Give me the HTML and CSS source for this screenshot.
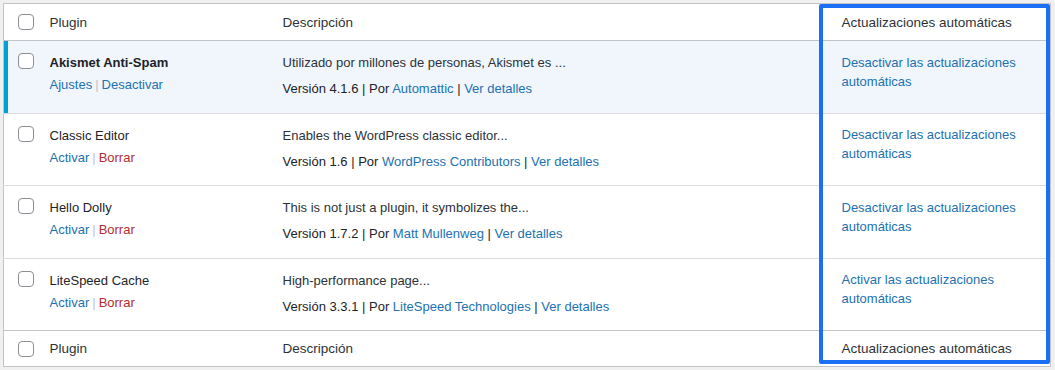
FILE: index.html
```html
<!DOCTYPE html>
<html lang="es">
<head>
    <meta charset="UTF-8">
    <meta name="viewport" content="width=device-width, initial-scale=1.0">
    <title>Plugins</title>
    <link rel="stylesheet" href="styles.css">
</head>
<body>
    <table class="plugins">
        <colgroup>
            <col class="colCheck">
            <col class="colName">
            <col class="colDesc">
            <col class="colAuto">
        </colgroup>
        <thead>
            <tr>
                <td class="check"><input type="checkbox"></td>
                <th>Plugin</th>
                <th>Descripción</th>
                <th>Actualizaciones automáticas</th>
            </tr>
        </thead>
        <tbody>
            <tr class="active">
                <td class="check"><input type="checkbox"></td>
                <td class="name">
                    <strong>Akismet Anti-Spam</strong>
                    <div class="rowActions"><a href="#">Ajustes</a><span class="sep">|</span><a href="#">Desactivar</a></div>
                </td>
                <td class="desc">
                    <p>Utilizado por millones de personas, Akismet es ...</p>
                    <p>Versión 4.1.6 | Por <a href="#">Automattic</a> | <a href="#">Ver detalles</a></p>
                </td>
                <td class="auto"><a href="#">Desactivar las actualizaciones automáticas</a></td>
            </tr>
            <tr>
                <td class="check"><input type="checkbox"></td>
                <td class="name">
                    <span class="title">Classic Editor</span>
                    <div class="rowActions"><a href="#">Activar</a><span class="sep">|</span><a href="#" class="delete">Borrar</a></div>
                </td>
                <td class="desc">
                    <p>Enables the WordPress classic editor...</p>
                    <p>Versión 1.6 | Por <a href="#">WordPress Contributors</a> | <a href="#">Ver detalles</a></p>
                </td>
                <td class="auto"><a href="#">Desactivar las actualizaciones automáticas</a></td>
            </tr>
            <tr>
                <td class="check"><input type="checkbox"></td>
                <td class="name">
                    <span class="title">Hello Dolly</span>
                    <div class="rowActions"><a href="#">Activar</a><span class="sep">|</span><a href="#" class="delete">Borrar</a></div>
                </td>
                <td class="desc">
                    <p>This is not just a plugin, it symbolizes the...</p>
                    <p>Versión 1.7.2 | Por <a href="#">Matt Mullenweg</a> | <a href="#">Ver detalles</a></p>
                </td>
                <td class="auto"><a href="#">Desactivar las actualizaciones automáticas</a></td>
            </tr>
            <tr>
                <td class="check"><input type="checkbox"></td>
                <td class="name">
                    <span class="title">LiteSpeed Cache</span>
                    <div class="rowActions"><a href="#">Activar</a><span class="sep">|</span><a href="#" class="delete">Borrar</a></div>
                </td>
                <td class="desc">
                    <p>High-performance page...</p>
                    <p>Versión 3.3.1 | Por <a href="#">LiteSpeed Technologies</a> | <a href="#">Ver detalles</a></p>
                </td>
                <td class="auto"><a href="#">Activar las actualizaciones automáticas</a></td>
            </tr>
        </tbody>
        <tfoot>
            <tr>
                <td class="check"><input type="checkbox"></td>
                <th>Plugin</th>
                <th>Descripción</th>
                <th>Actualizaciones automáticas</th>
            </tr>
        </tfoot>
    </table>

    <div class="highlight"></div>
</body>
</html>
```

FILE: styles.css
```css
body {
    font-family: 'Liberation Sans', Arial, sans-serif;
    font-size: 13px;
    color: #2c3338;
    background: #f0f0f1;
    margin: 0;
    padding: 3px 4px 3px 3px;
    position: relative;
}

a {
    color: #2271b1;
    text-decoration: none;
}

.plugins {
    width: 1048px;
    table-layout: fixed;
    border-collapse: collapse;
    background: #fff;
    border: 1px solid #c3c4c7;
}

.colCheck { width: 36px; }
.colName { width: 233px; }
.colDesc { width: 559px; }

.plugins th {
    font-weight: normal;
    font-size: 13.5px;
    text-align: left;
    color: #2c3338;
    padding: 0 10px;
    line-height: 20px;
}

.plugins thead tr {
    height: 37px;
    border-bottom: 1px solid #c3c4c7;
}

.plugins thead th {
    padding-top: 1px;
}

.plugins tfoot tr {
    height: 36px;
    border-top: 1px solid #c3c4c7;
}

.plugins tbody tr {
    height: 72.5px;
    border-top: 1px solid #dcdcde;
}

.plugins tbody tr:first-child {
    border-top: none;
}

.plugins tbody td {
    vertical-align: top;
    padding: 12px 10px 0;
    line-height: 20px;
}

.plugins td.check {
    padding: 0 0 0 14px;
    vertical-align: middle;
}

.plugins tbody td.check {
    padding-top: 12px;
    vertical-align: top;
}

.plugins tfoot td.check {
    padding-top: 1px;
}

input[type="checkbox"] {
    appearance: none;
    display: block;
    width: 16px;
    height: 16px;
    margin: 0;
    border: 1px solid #8c8f94;
    border-radius: 4px;
    background: #fff;
}

.active td {
    background: #f0f6fc;
}

.active td.check {
    box-shadow: inset 4px 0 0 #00a0d2;
}

.name strong {
    font-weight: bold;
    color: #1d2327;
}

.title {
    color: #1d2327;
}

.rowActions {
    padding-top: 2px;
}

.rowActions .sep {
    color: #c3c4c7;
    margin: 0 3px;
}

.rowActions .delete {
    color: #b32d2e;
}

.desc p {
    margin: 0;
}

.desc p + p {
    margin-top: 6px;
    color: #1d2327;
}

.plugins tbody td.auto {
    line-height: 19px;
    padding-top: 11.5px;
}

.highlight {
    position: absolute;
    left: 819px;
    top: 4px;
    width: 231px;
    height: 360px;
    box-sizing: border-box;
    border: 4px solid #1b6ff5;
    border-radius: 2px;
}
```
